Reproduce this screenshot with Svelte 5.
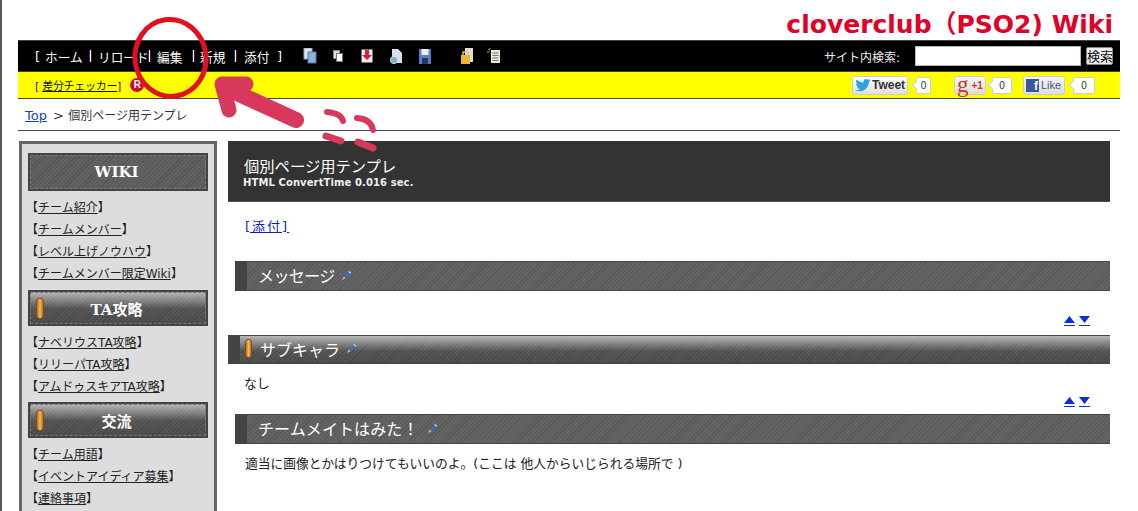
<script>
  const nav = ['ホーム', 'リロード', '編集', '新規', '添付'];
  const groups = [
    { title: 'WIKI', cls: 'flat', links: ['チーム紹介', 'チームメンバー', 'レベル上げノウハウ', 'チームメンバー限定Wiki'] },
    { title: 'TA攻略', cls: 'gloss', links: ['ナベリウスTA攻略', 'リリーパTA攻略', 'アムドゥスキアTA攻略'] },
    { title: '交流', cls: 'gloss', links: ['チーム用語', 'イベントアイディア募集', '連絡事項'] }
  ];
</script>

{#snippet pencil()}
  <svg class="pencil" width="11" height="11" viewBox="0 0 12 12"><path d="M1 11 L3 7 L9 1 L11 3 L5 9 Z" fill="#2f6fd8"/><path d="M9 1 L11 3 L10 4 L8 2 Z" fill="#dfe8f5"/><path d="M1 11 L3 7 L5 9 Z" fill="#f0b070"/></svg>
{/snippet}

{#snippet arrows()}
  <span class="tri"><svg width="11" height="10" viewBox="0 0 11 10"><path d="M5.5 0 L11 7 H0 Z" fill="#0a2fe0"/><path d="M0 9.5 H11" stroke="#0a2fe0"/></svg></span>
  <span class="tri"><svg width="11" height="10" viewBox="0 0 11 10"><path d="M0 0 H11 L5.5 7 Z" fill="#0a2fe0"/><path d="M0 9.5 H11" stroke="#0a2fe0"/></svg></span>
{/snippet}

{#snippet pill()}
  <i class="pill"></i>
{/snippet}

<div class="page">
  <h1 class="sitetitle">cloverclub（PSO2) Wiki</h1>

  <div class="topbars">
    <div class="blackbar">
      <div class="navlist">
        <span>[</span>
        {#each nav as n, i}
          {#if i > 0}<span class="sep"></span>{/if}
          <span class="navitem">{n}</span>
        {/each}
        <span>]</span>
      </div>
      <div class="tools">
        <svg width="14" height="16" viewBox="0 0 14 16"><rect x="1" y="0" width="8" height="11" fill="#dfe6f2" stroke="#9aa"/><rect x="5" y="4" width="8" height="11" fill="#8fb0dc" stroke="#5577aa"/></svg>
        <svg class="t2" width="10" height="12" viewBox="0 0 10 12"><rect x="0.5" y="0.5" width="6" height="8" fill="#ddd" stroke="#888"/><rect x="3.5" y="3.5" width="6" height="8" fill="#fff" stroke="#777"/></svg>
        <svg class="t3" width="12" height="14" viewBox="0 0 12 14"><rect x="0.5" y="0.5" width="11" height="13" fill="#eee"/><path d="M4 1 H8 V6 H11 L6 11 L1 6 H4 Z" fill="#d0203c"/></svg>
        <svg class="t4" width="12" height="15" viewBox="0 0 12 15"><path d="M2 0 H8 L12 4 V14 H2 Z" fill="#dde"/><circle cx="4" cy="11" r="3.6" fill="#7fb0c8" stroke="#cde"/></svg>
        <svg class="t5" width="12" height="15" viewBox="0 0 12 15"><rect x="0" y="0" width="12" height="15" fill="#5b7fc0"/><rect x="2.5" y="0" width="7" height="6" fill="#eef"/><rect x="3" y="9" width="6" height="6" fill="#223a70"/></svg>
        <svg class="t6" width="12" height="16" viewBox="0 0 12 16"><path d="M4 0 H12 V14 H4 Z" fill="#ddd"/><rect x="0" y="7" width="9" height="9" fill="#e8b830"/><path d="M2 7 V4 H7 V7" fill="none" stroke="#e8c860" stroke-width="1.4"/></svg>
        <svg class="t7" width="14" height="16" viewBox="0 0 14 16"><rect x="4" y="2" width="9" height="13" fill="#ece8dc"/><path d="M5.5 5 H11.5 M5.5 7.5 H11.5 M5.5 10 H11.5 M5.5 12.5 H11.5" stroke="#777"/><path d="M1 1 L3 2.5 M0 4 H2 M3 0 V1" stroke="#e8a060"/></svg>
      </div>
      <div class="search">
        <span class="searchlabel">サイト内検索:</span>
        <input class="searchbox" type="text" />
        <button class="searchbtn">検索</button>
      </div>
    </div>
    <div class="yellowbar">
      <div class="checker">
        <span>[ <a href="#a">差分チェッカー</a>]</span>
        <b class="rbadge">R</b>
      </div>
      <div class="social">
        <span class="sbtn tw">
          <svg width="16" height="13" viewBox="0 0 16 13"><path d="M0 11 C5 14 13 12 14 3 L16 1 L14 1.5 L15 0 L13 .8 C11 -1 8 0.5 8.5 3.5 C5.5 3.5 3 2 1.5 .5 C.5 2.5 1.2 4 2.5 5 L1 4.7 C1 6.2 2.2 7.4 3.7 7.8 L2.2 7.9 C2.7 9 3.8 9.8 5 9.9 C3.5 11 2 11.3 0 11 Z" fill="#2aa3e0"/></svg>
          Tweet
        </span>
        <span class="count c1">0</span>
        <span class="sbtn gp"><em>g</em><b>+1</b></span>
        <span class="count c2">0</span>
        <span class="sbtn fb"><i class="f">f</i>Like</span>
        <span class="count c3">0</span>
      </div>
    </div>
  </div>

  <div class="crumb"><a href="#t">Top</a> <span class="gt">&gt;</span> <span class="path">個別ページ用テンプレ</span></div>

  <div class="columns">
    <aside class="side">
      {#each groups as g}
        <div class="sidehead {g.cls}">
          {#if g.cls === 'gloss'}{@render pill()}{/if}
          <span>{g.title}</span>
        </div>
        <ul class="sidelinks">
          {#each g.links as l}
            <li>【<a href="#l">{l}</a>】</li>
          {/each}
        </ul>
      {/each}
    </aside>

    <main class="main">
      <div class="pagehead">
        <div class="ph1">個別ページ用テンプレ</div>
        <div class="ph2">HTML ConvertTime 0.016 sec.</div>
      </div>
      <p class="attach"><a href="#x">[添付]</a></p>

      <h2 class="h2bar">メッセージ {@render pencil()}</h2>
      <div class="updown">{@render arrows()}</div>

      <h3 class="h3bar">{@render pill()}<span>サブキャラ</span> {@render pencil()}</h3>
      <p class="none">なし</p>
      <div class="updown second">{@render arrows()}</div>

      <h2 class="h2bar third">チームメイトはみた！ {@render pencil()}</h2>
      <p class="body">適当に画像とかはりつけてもいいのよ。(ここは 他人からいじられる場所で )</p>
    </main>
  </div>

  <svg class="marks" width="1138" height="511" viewBox="0 0 1138 511">
    <ellipse cx="170.5" cy="58" rx="35.5" ry="38.5" transform="rotate(-8 170 58)" fill="none" stroke="#e3101f" stroke-width="5"/>
    <g class="paint" fill="none" stroke="#d8385c" stroke-linecap="round" stroke-linejoin="round">
      <path d="M226 88 L296 120" stroke-width="16"/>
      <path d="M246 84 L222 84 L229 110" stroke-width="15"/>
      <path d="M327 112 Q341 113 343 121" stroke-width="6"/>
      <path d="M326 136 L341 141" stroke-width="7"/>
      <path d="M357 118 Q371 119 373 130" stroke-width="6"/>
      <path d="M358 142 L373 148" stroke-width="7"/>
    </g>
  </svg>
</div>

<style>
  :global(body) { margin: 0; background: #fff; }
  .page {
    position: relative;
    height: 511px;
    overflow: hidden;
    box-sizing: border-box;
    border-left: 2px solid #555;
    padding-left: 16px;
    font-family: "DejaVu Sans", "Noto Sans CJK JP", sans-serif;
    font-size: 13px;
    color: #222;
  }
  .sitetitle {
    margin: 0;
    height: 40px;
    box-sizing: border-box;
    padding: 11px 25px 0 0;
    text-align: right;
    font: bold 25px/28px "DejaVu Sans", "Noto Sans CJK JP", sans-serif;
    color: #e00028;
  }
  .topbars { width: 1102px; border-top: 1px solid #444; border-bottom: 1px solid #444; }
  .blackbar {
    height: 30px;
    background: #000;
    color: #fff;
    display: flex;
    align-items: center;
    border-bottom: 1px solid #444;
  }
  .navlist {
    display: grid;
    grid-template-columns: 10px 45px 8px 51px 8px 36px 7px 35px 9px 33px 10px;
    align-items: center;
    padding-left: 17px;
    width: 265px;
    flex: none;
    box-sizing: border-box;
    white-space: nowrap;
  }
  .navitem { font-size: 12.7px; }
  .sep { width: 1px; height: 12px; background: #fff; box-shadow: -1px 0 #1030a0, 1px 0 #601010; }
  .tools { display: flex; align-items: center; margin-left: 20px; }
  .tools svg { display: block; }
  .t2 { margin-left: 16px; }
  .t3 { margin-left: 18px; }
  .t4 { margin-left: 17px; }
  .t5 { margin-left: 17px; }
  .t6 { margin-left: 30px; }
  .t7 { margin-left: 14px; }
  .search { margin-left: auto; display: flex; align-items: center; padding-right: 7px; }
  .searchlabel { font-size: 12px; color: #eee; margin-right: 15px; }
  .searchbox { width: 166px; height: 20px; box-sizing: border-box; border: 1px solid #bbb; background: #fff; padding: 0; }
  .searchbtn {
    width: 27px; height: 18px; margin-left: 5px; padding: 0;
    border: 1px solid #888; border-radius: 2px; background: #eee; color: #111;
    font: 13px "Noto Sans CJK JP", sans-serif; line-height: 14px; overflow: hidden; white-space: nowrap;
  }
  .yellowbar {
    height: 26px;
    background: #ff0;
    display: flex;
    align-items: center;
    justify-content: space-between;
    padding: 0 25px 0 17px;
  }
  .checker { display: flex; align-items: center; font-size: 11px; letter-spacing: -.3px; }
  .checker a { color: #111; }
  .rbadge {
    flex: none;
    width: 14px; height: 14px; border-radius: 50%; margin-left: 9px;
    background: #c8102e; color: #fff; font: bold 10px/14px "Liberation Sans", sans-serif; text-align: center;
  }
  .social { display: flex; align-items: center; font-family: "Liberation Sans", sans-serif; font-size: 11px; }
  .sbtn {
    height: 19px; box-sizing: border-box; display: flex; align-items: center; gap: 2px;
    border: 1px solid #ccc; border-radius: 3px; background: linear-gradient(#fff, #dedede);
  }
  .tw { width: 56px; padding-left: 2px; gap: 1px; font-weight: bold; color: #333; font-size: 12px; white-space: nowrap; }
  .gp { width: 32px; padding-left: 2px; background: linear-gradient(#f6f6f6, #e0dcd0); }
  .gp em { font: 23px/16px "Liberation Serif", serif; color: #c8372c; }
  .gp b { color: #c8372c; font-size: 10px; margin-left: 1px; }
  .fb { width: 42px; padding-left: 2px; color: #556; background: linear-gradient(#f2f4f9, #d8dfea); }
  .f { width: 13px; height: 13px; background: #3b5998; color: #fff; font: bold 12px/14px "Liberation Sans", sans-serif; text-align: right; padding-right: 1px; box-sizing: border-box; }
  .count {
    height: 17px; box-sizing: border-box; background: #fff; border: 1px solid #ccc; border-radius: 2px;
    text-align: center; line-height: 15px; color: #333; font-size: 10px; position: relative;
  }
  .count::before {
    content: ""; position: absolute; left: -4px; top: 4px; width: 5px; height: 5px;
    background: #fff; border-left: 1px solid #ccc; border-bottom: 1px solid #ccc; transform: rotate(45deg);
  }
  .c1 { width: 15px; margin: 0 23px 0 8px; }
  .c2 { width: 20px; margin: 0 11px 0 6px; }
  .c3 { width: 22px; margin-left: 8px; }
  .crumb {
    width: 1102px; height: 32px; box-sizing: border-box; padding: 8px 0 0 7px;
    line-height: 18px; border-bottom: 1px solid #444; color: #333;
  }
  .crumb a { color: #1a3fb0; }
  .gt { margin-left: 2px; }
  .path { font-size: 12px; }
  .columns { display: flex; padding-top: 10px; }
  .side {
    width: 198px; box-sizing: border-box; margin-left: 1px; height: 380px;
    background: #ddd; border: 3px solid #666; padding: 9px 6px 0 6px;
  }
  .sidehead {
    height: 38px; box-sizing: border-box; position: relative;
    display: flex; align-items: center; justify-content: center; padding-right: 3px;
    border: 2px solid #444; outline: 1px dashed #777; outline-offset: -3px;
    color: #fff; font: bold 15px "DejaVu Serif", "Noto Sans CJK JP", serif;
    background: repeating-linear-gradient(135deg, #555 0 1px, #626262 1px 3px);
  }
  .sidehead.gloss {
    height: 36px;
    background:
      linear-gradient(rgba(255,255,255,.6), rgba(255,255,255,.05) 52%, rgba(0,0,0,0)),
      repeating-linear-gradient(135deg, #444 0 1px, #505050 1px 3px);
  }
  .pill {
    display: block; width: 6px; height: 19px; border-radius: 3px;
    background: linear-gradient(90deg, #c06a10, #f6b860 50%, #c06a10);
    box-shadow: 0 0 0 1px #7a5020;
  }
  .sidehead .pill { position: absolute; left: 7px; top: 7px; }
  .sidelinks { list-style: none; margin: 0; padding: 6px 0 5px 0; font-size: 12px; }
  .gloss + .sidelinks { padding-bottom: 4px; }
  .sidelinks li { height: 22px; line-height: 22px; margin-left: -2px; white-space: nowrap; color: #222; }
  .sidelinks a { color: #222; }
  .main { width: 882px; margin-left: 11px; }
  .pagehead {
    height: 61px; box-sizing: border-box; background: #333; color: #fff; padding: 16px 0 0 16px;
    border-bottom: 1px solid #555;
  }
  .ph1 { font-size: 15.3px; line-height: 20px; }
  .ph2 { font: bold 10px/12px "DejaVu Sans", sans-serif; color: #eee; margin-left: -1px; letter-spacing: .1px; }
  .attach { margin: 0; height: 59px; box-sizing: border-box; padding: 16px 0 0 17px; line-height: 18px; letter-spacing: 2px; }
  .attach a { color: #0a1fc0; }
  .h2bar, .h3bar {
    margin: 0; height: 30px; box-sizing: border-box; display: flex; align-items: center; gap: 6px;
    color: #fff; font-size: 16px; font-weight: normal; border-bottom: 1px solid #444; border-top: 1px solid #444;
    padding-bottom: 2px;
  }
  .h2bar {
    margin-left: 7px; padding-left: 11px; letter-spacing: -.6px;
    border-left: 12px solid #444;
    background: repeating-linear-gradient(135deg, #585858 0 1px, #646464 1px 3px);
  }
  .h3bar {
    height: 29px; padding-left: 6px; letter-spacing: 0;
    border-left: 12px solid #444;
    background:
      linear-gradient(rgba(255,255,255,.6), rgba(255,255,255,.05) 55%, rgba(0,0,0,0)),
      repeating-linear-gradient(135deg, #444 0 1px, #505050 1px 3px);
  }
  .h3bar .pill { height: 17px; width: 5px; margin-right: 3px; }
  .pencil { display: block; flex: none; }
  .updown { display: flex; justify-content: flex-end; gap: 4px; padding: 25px 20px 0 0; height: 44px; box-sizing: border-box; }
  .updown.second { padding-top: 0; height: 17px; }
  .tri { display: block; height: 10px; }
  .tri svg { display: block; }
  .none { margin: 0; padding: 11px 0 0 16px; line-height: 18px; height: 33px; box-sizing: border-box; font-size: 12.75px; }
  .third { letter-spacing: .1px; gap: 8px; }
  .body { margin: 0; padding: 11px 0 0 17px; line-height: 18px; font-size: 12.75px; white-space: nowrap; }
  .marks { position: absolute; left: -2px; top: 0; pointer-events: none; }
  .paint { filter: blur(.6px); }
</style>
